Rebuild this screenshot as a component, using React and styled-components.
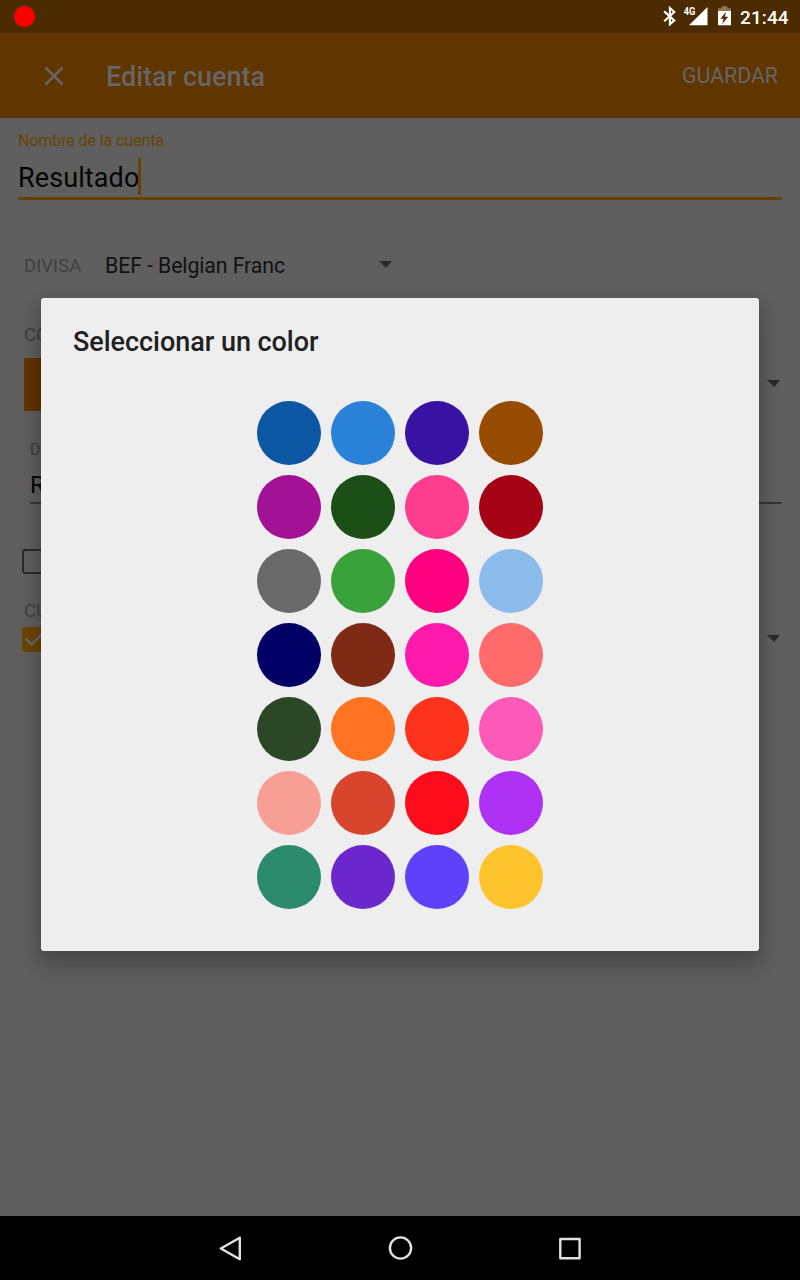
import React from "react";
import styled, { createGlobalStyle } from "styled-components";

const GlobalStyle = createGlobalStyle`
  *, *::before, *::after { box-sizing: border-box; }
  body { margin: 0; background: #5f5f5f; }
`;

const Screen = styled.div`
  position: relative;
  width: 800px;
  height: 1280px;
  overflow: hidden;
  display: flex;
  flex-direction: column;
  background: #5f5f5f;
  font-family: Roboto, sans-serif;
`;

const StatusBar = styled.div`
  height: 33px;
  flex: none;
  display: flex;
  align-items: center;
  padding: 0 11px 0 13.5px;
  background: #4c2b00;
`;

const RecordDot = styled.div`
  width: 21px;
  height: 21px;
  border-radius: 50%;
  background: #ff0000;
  margin-right: auto;
`;

const StatusIcons = styled.svg`
  display: block;
  width: 72px;
  height: 33px;
  margin-right: 5px;
`;

const Clock = styled.span`
  font-size: 19px;
  font-weight: 500;
  color: #fff;
  width: 49px;
  line-height: 33px;
  padding-top: 1px;
  letter-spacing: 0.1px;
  white-space: nowrap;
`;

const AppBar = styled.header`
  height: 85px;
  flex: none;
  display: flex;
  align-items: center;
  padding: 0 22px 0 44px;
  background: #603500;
  color: #666;
`;

const CloseIcon = styled.svg`
  width: 20px;
  height: 20px;
  margin-right: 42px;
`;

const Title = styled.h1`
  margin: 3px auto 0 0;
  font-size: 27px;
  line-height: 32px;
  font-weight: 500;
`;

const SaveButton = styled.button`
  border: 0;
  padding: 0;
  background: none;
  color: inherit;
  font: 400 21.3px Roboto, sans-serif;
`;

const Form = styled.main`
  flex: 1;
  display: flex;
  flex-direction: column;
  padding: 13px 18px 0;
`;

const Field = styled.div`
  display: flex;
  flex-direction: column;
  margin-top: ${(p) => p.$top || 0}px;
  margin-left: ${(p) => (p.$focused ? 0 : 12)}px;
  border-bottom: ${(p) => (p.$focused ? "3px solid #664200" : "2px solid #363636")};
`;

const FieldLabel = styled.label`
  font-size: 16px;
  line-height: 20px;
  letter-spacing: -0.1px;
  color: ${(p) => (p.$focused ? "#664400" : "#3c3c3c")};
`;

const FieldValue = styled.div`
  display: flex;
  align-items: center;
  height: ${(p) => p.$height}px;
  padding-top: ${(p) => p.$drop}px;
  font-size: ${(p) => p.$size}px;
  letter-spacing: 0.1px;
  color: #050505;
`;

const Caret = styled.i`
  width: 3px;
  height: 37px;
  margin: -3px 0 0 -1px;
  background: #664400;
`;

const Row = styled.div`
  display: flex;
  align-items: center;
  height: ${(p) => p.$height}px;
  margin-top: ${(p) => p.$top || 0}px;
  padding: 0 2px 0 ${(p) => p.$left}px;
`;

const Caption = styled.span`
  font-size: 18.6px;
  line-height: 24px;
  color: #404040;
  width: ${(p) => p.$width || "auto"};
  margin: ${(p) => p.$margin || 0};
`;

const SelectValue = styled.span`
  width: 274px;
  font-size: 21.3px;
  line-height: 28px;
  letter-spacing: -0.1px;
  padding-top: 1px;
  color: #121212;
`;

const Arrow = styled.i`
  width: 0;
  height: 0;
  margin-left: ${(p) => (p.$end ? "auto" : 0)};
  margin-top: -2px;
  border: 6.5px solid transparent;
  border-left-width: 7px;
  border-top: 7px solid #2a2a2a;
  border-bottom: 0;
`;

const Swatch = styled.span`
  width: 84px;
  height: 53px;
  background: #603500;
`;

const Box = styled.span`
  display: flex;
  width: 25px;
  height: 25px;
  border: ${(p) => (p.$checked ? "2.5px solid #6a4500" : "2px solid #2b2b2b")};
  border-radius: 3px;
  background: ${(p) => (p.$checked ? "#6a4500" : "transparent")};
  svg { width: 20px; height: 20px; }
`;

const Dialog = styled.section`
  position: absolute;
  left: 41px;
  top: 298px;
  width: 718px;
  height: 653px;
  padding: 28px 32px 0;
  border-radius: 3px;
  background: #eee;
  box-shadow: 0 16px 20px 3px rgba(0, 0, 0, 0.16), 0 2px 18px rgba(0, 0, 0, 0.16);
`;

const DialogTitle = styled.h2`
  margin: 0;
  font-size: 27px;
  line-height: 32px;
  font-weight: 500;
  letter-spacing: -0.04px;
  color: #212121;
`;

const Palette = styled.div`
  display: grid;
  grid-template-columns: repeat(4, 64px);
  gap: 10px;
  justify-content: center;
  margin-top: 43px;
`;

const ColorDot = styled.button`
  width: 64px;
  height: 64px;
  border: 0;
  padding: 0;
  border-radius: 50%;
  background: ${(p) => p.$color};
`;

const NavBar = styled.nav`
  height: 64px;
  flex: none;
  display: flex;
  align-items: center;
  justify-content: center;
  gap: 138px;
  background: #000;
`;

const NavIcon = styled.svg`
  width: 32px;
  height: 32px;
  fill: none;
  stroke: #e2e2e2;
  stroke-width: 2.4;
  stroke-linejoin: round;
`;

const colors = [
  "#0b57a4", "#2a82d8", "#3813a3", "#964b00",
  "#a31296", "#1c4f17", "#ff3d8f", "#a50216",
  "#696969", "#3aa23a", "#ff0080", "#8abbea",
  "#000066", "#7f2a14", "#ff1aae", "#ff6b6b",
  "#2c4726", "#ff7322", "#fd331c", "#fd59b8",
  "#f79f95", "#d8452c", "#fd0d1b", "#ae31f4",
  "#2c8b6e", "#6b27cd", "#5f41fb", "#fec42e",
];

export default function App() {
  return (
    <Screen>
      <GlobalStyle />
      <StatusBar>
        <RecordDot />
        <StatusIcons viewBox="663 0 72 33">
          <path d="M664.2 11.4 674.3 20.4 669.9 24.2V8L674.3 12 664.2 21.2" fill="none" stroke="#fff" strokeWidth="2.1" />
          <text x="683.8" y="15.200" fontSize="10.500" fontWeight="700" fill="#fff" textLength="11.600" lengthAdjust="spacingAndGlyphs">4G</text>
          <path d="M707.5 7V25.2H689Z" fill="#fff" />
          <path d="M721.5 6.200h6v2h3.5v3H718V8.200h3.500Z" fill="#8c7556" />
          <path fillRule="evenodd" d="M718 11h13v14.200H718Zm8 .800-5.500 6.900h3.100l-1.400 5.300 6-7.200h-3.300Z" fill="#fff" />
        </StatusIcons>
        <Clock>21:44</Clock>
      </StatusBar>
      <AppBar>
        <CloseIcon viewBox="0 0 20 20">
          <path d="M1.500 1.500 18.500 18.500M18.500 1.500 1.500 18.500" stroke="#666" strokeWidth="2.500" />
        </CloseIcon>
        <Title>Editar cuenta</Title>
        <SaveButton>GUARDAR</SaveButton>
      </AppBar>
      <Form>
        <Field $focused>
          <FieldLabel $focused>Nombre de la cuenta</FieldLabel>
          <FieldValue $height={46} $drop={8} $size={27}>
            Resultado
            <Caret />
          </FieldValue>
        </Field>
        <Row $top={48} $height={35} $left={6}>
          <Caption $width="81px">DIVISA</Caption>
          <SelectValue>BEF - Belgian Franc</SelectValue>
          <Arrow />
        </Row>
        <Caption $margin="40px 0 0 6px">CO</Caption>
        <Row $top={11} $height={53} $left={6}>
          <Swatch />
          <Arrow $end />
        </Row>
        <Field $top={29}>
          <FieldLabel>Descripción</FieldLabel>
          <FieldValue $height={42} $drop={8} $size={24}>Resultado</FieldValue>
        </Field>
        <Row $top={45} $height={25} $left={4}>
          <Box />
        </Row>
        <Caption $margin="25px 0 0 6px">CUENTA</Caption>
        <Row $top={4} $height={25} $left={4}>
          <Box $checked>
            <svg viewBox="0 0 20 20">
              <path d="M1.500 9.500 7.500 15.500 18.500 4.500" fill="none" stroke="#666" strokeWidth="2.500" />
            </svg>
          </Box>
          <Arrow $end />
        </Row>
      </Form>
      <NavBar>
        <NavIcon viewBox="0 0 32 32">
          <path d="M6.800 16.500 25.800 5.700V27.300Z" />
        </NavIcon>
        <NavIcon viewBox="0 0 32 32">
          <circle cx="16.500" cy="16" r="10.600" />
        </NavIcon>
        <NavIcon viewBox="0 0 32 32">
          <rect x="6.300" y="7" width="19.300" height="19.300" />
        </NavIcon>
      </NavBar>
      <Dialog>
        <DialogTitle>Seleccionar un color</DialogTitle>
        <Palette>
          {colors.map((c) => (
            <ColorDot key={c} $color={c} />
          ))}
        </Palette>
      </Dialog>
    </Screen>
  );
}
